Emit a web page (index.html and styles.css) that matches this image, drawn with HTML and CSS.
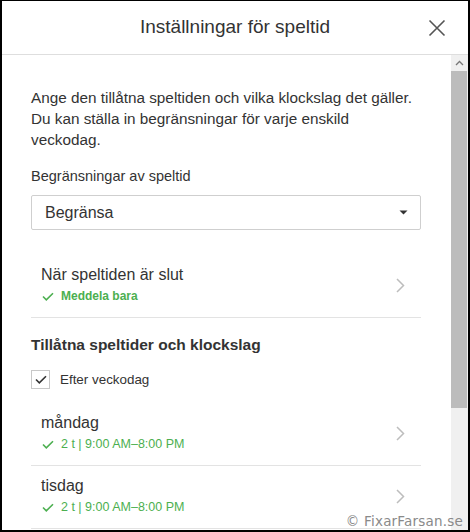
FILE: index.html
```html
<!DOCTYPE html>
<html lang="sv">
<head>
<meta charset="utf-8">
<title>Inställningar för speltid</title>
<link rel="stylesheet" href="styles.css">
</head>
<body>
<div class="frame">
  <header class="header">
    <span></span>
    <h1 class="title">Inställningar för speltid</h1>
    <button class="close" aria-label="Stäng">
      <svg width="18" height="18" viewBox="0 0 18 18"><path d="M1.5 1.5 L16.5 16.5 M16.5 1.5 L1.5 16.5" stroke="#555" stroke-width="1.6" fill="none"/></svg>
    </button>
  </header>
  <div class="body">
    <main class="content">
      <p class="intro">Ange den tillåtna speltiden och vilka klockslag det gäller. Du kan ställa in begränsningar för varje enskild veckodag.</p>
      <div class="label">Begränsningar av speltid</div>
      <div class="select">
        <span>Begränsa</span>
        <svg width="9" height="5" viewBox="0 0 9 5"><path d="M0.5 0.5 H8.5 L4.5 4.5 Z" fill="#333"/></svg>
      </div>
      <div class="row first">
        <div class="row-text">
          <div class="row-title">När speltiden är slut</div>
          <div class="row-sub bold"><svg class="check" width="12" height="9" viewBox="0 0 12 9"><path d="M1 4.5 L4.3 7.8 L11 1.2" stroke="#4caf50" stroke-width="1.6" fill="none"/></svg>Meddela bara</div>
        </div>
        <svg class="chev" width="9" height="15" viewBox="0 0 9 15"><path d="M1 1 L7.5 7.5 L1 14" stroke="#bdbdbd" stroke-width="1.5" fill="none"/></svg>
      </div>
      <h2 class="heading">Tillåtna speltider och klockslag</h2>
      <label class="checkrow">
        <span class="box"><svg width="12" height="9" viewBox="0 0 12 9"><path d="M1 4.5 L4.3 7.8 L11 1.2" stroke="#333" stroke-width="1.6" fill="none"/></svg></span>
        <span>Efter veckodag</span>
      </label>
      <div class="row">
        <div class="row-text">
          <div class="row-title">måndag</div>
          <div class="row-sub"><svg class="check" width="12" height="9" viewBox="0 0 12 9"><path d="M1 4.5 L4.3 7.8 L11 1.2" stroke="#4caf50" stroke-width="1.6" fill="none"/></svg>2 t | 9:00 AM–8:00 PM</div>
        </div>
        <svg class="chev" width="9" height="15" viewBox="0 0 9 15"><path d="M1 1 L7.5 7.5 L1 14" stroke="#bdbdbd" stroke-width="1.5" fill="none"/></svg>
      </div>
      <div class="row">
        <div class="row-text">
          <div class="row-title">tisdag</div>
          <div class="row-sub"><svg class="check" width="12" height="9" viewBox="0 0 12 9"><path d="M1 4.5 L4.3 7.8 L11 1.2" stroke="#4caf50" stroke-width="1.6" fill="none"/></svg>2 t | 9:00 AM–8:00 PM</div>
        </div>
        <svg class="chev" width="9" height="15" viewBox="0 0 9 15"><path d="M1 1 L7.5 7.5 L1 14" stroke="#bdbdbd" stroke-width="1.5" fill="none"/></svg>
      </div>
    </main>
    <div class="scrollbar">
      <div class="arrow"><svg width="9" height="6" viewBox="0 0 9 6"><path d="M1 5 L4.5 1.5 L8 5" stroke="#777" stroke-width="1.3" fill="none"/></svg></div>
      <div class="thumb"></div>
    </div>
  </div>
  <div class="watermark">© FixarFarsan.se</div>
</div>
</body>
</html>
```

FILE: styles.css
```css
* { box-sizing: border-box; }
html, body { margin: 0; padding: 0; background: #fff; }
body { font-family: "Liberation Sans", Arial, sans-serif; color: #333; }

.frame {
  position: relative;
  width: 470px;
  height: 532px;
  border: 2px solid #000;
  border-top-width: 1px;
  display: flex;
  flex-direction: column;
  overflow: hidden;
  background: #fff;
}

.header {
  height: 54px;
  flex: none;
  display: grid;
  grid-template-columns: 1fr auto 1fr;
  align-items: center;
  border-bottom: 1px solid #dedede;
}
.title {
  margin: 0;
  font-size: 19px;
  font-weight: normal;
  color: #333;
  padding-bottom: 1px;
}
.close {
  justify-self: end;
  margin-right: 22px;
  padding: 0;
  border: 0;
  background: none;
  display: flex;
}

.body {
  flex: 1;
  display: flex;
  min-height: 0;
}
.content {
  flex: 1;
  padding: 32px 30px 0 29px;
  overflow: hidden;
}
.intro {
  margin: 0;
  font-size: 15.3px;
  line-height: 21px;
  color: #333;
}
.label {
  margin-top: 16px;
  font-size: 14.5px;
  line-height: 20px;
}
.select {
  margin-top: 9px;
  height: 35px;
  border: 1px solid #cfcfcf;
  border-radius: 2px;
  display: flex;
  align-items: center;
  justify-content: space-between;
  padding: 0 12px 0 13px;
  font-size: 16px;
}
.row {
  display: flex;
  align-items: center;
  justify-content: space-between;
  padding: 10px 16px 11px 10px;
  border-bottom: 1px solid #e3e3e3;
}
.row.first { margin-top: 25px; }
.row-title {
  font-size: 16px;
  line-height: 20px;
  color: #333;
}
.row-sub {
  margin-top: 1px;
  font-size: 12.5px;
  line-height: 20px;
  color: #4caf50;
  display: flex;
  align-items: center;
}
.row-sub.bold { font-weight: bold; font-size: 12px; }
.check { margin: 0 7px 0 1px; flex: none; }
.chev { flex: none; }

.heading {
  margin: 16px 0 0 0;
  font-size: 15.5px;
  line-height: 22px;
  font-weight: bold;
  color: #333;
}
.checkrow {
  margin-top: 14px;
  display: flex;
  align-items: center;
  gap: 10px;
  font-size: 13.4px;
  margin-bottom: 14px;
}
.box {
  width: 19px;
  height: 19px;
  border: 1px solid #c8c8c8;
  display: flex;
  align-items: center;
  justify-content: center;
}

.scrollbar {
  width: 17px;
  flex: none;
  background: #f0f0f0;
  display: flex;
  flex-direction: column;
}
.arrow {
  height: 16px;
  display: flex;
  align-items: center;
  justify-content: center;
}
.thumb {
  height: 337px;
  margin: 0 1px 0 0;
  background: #bcbcbc;
}

.watermark {
  position: absolute;
  right: 5px;
  bottom: 1px;
  font-family: "DejaVu Sans", sans-serif;
  font-size: 13.5px;
  color: #8a8a8a;
  letter-spacing: 0.2px;
}
```
